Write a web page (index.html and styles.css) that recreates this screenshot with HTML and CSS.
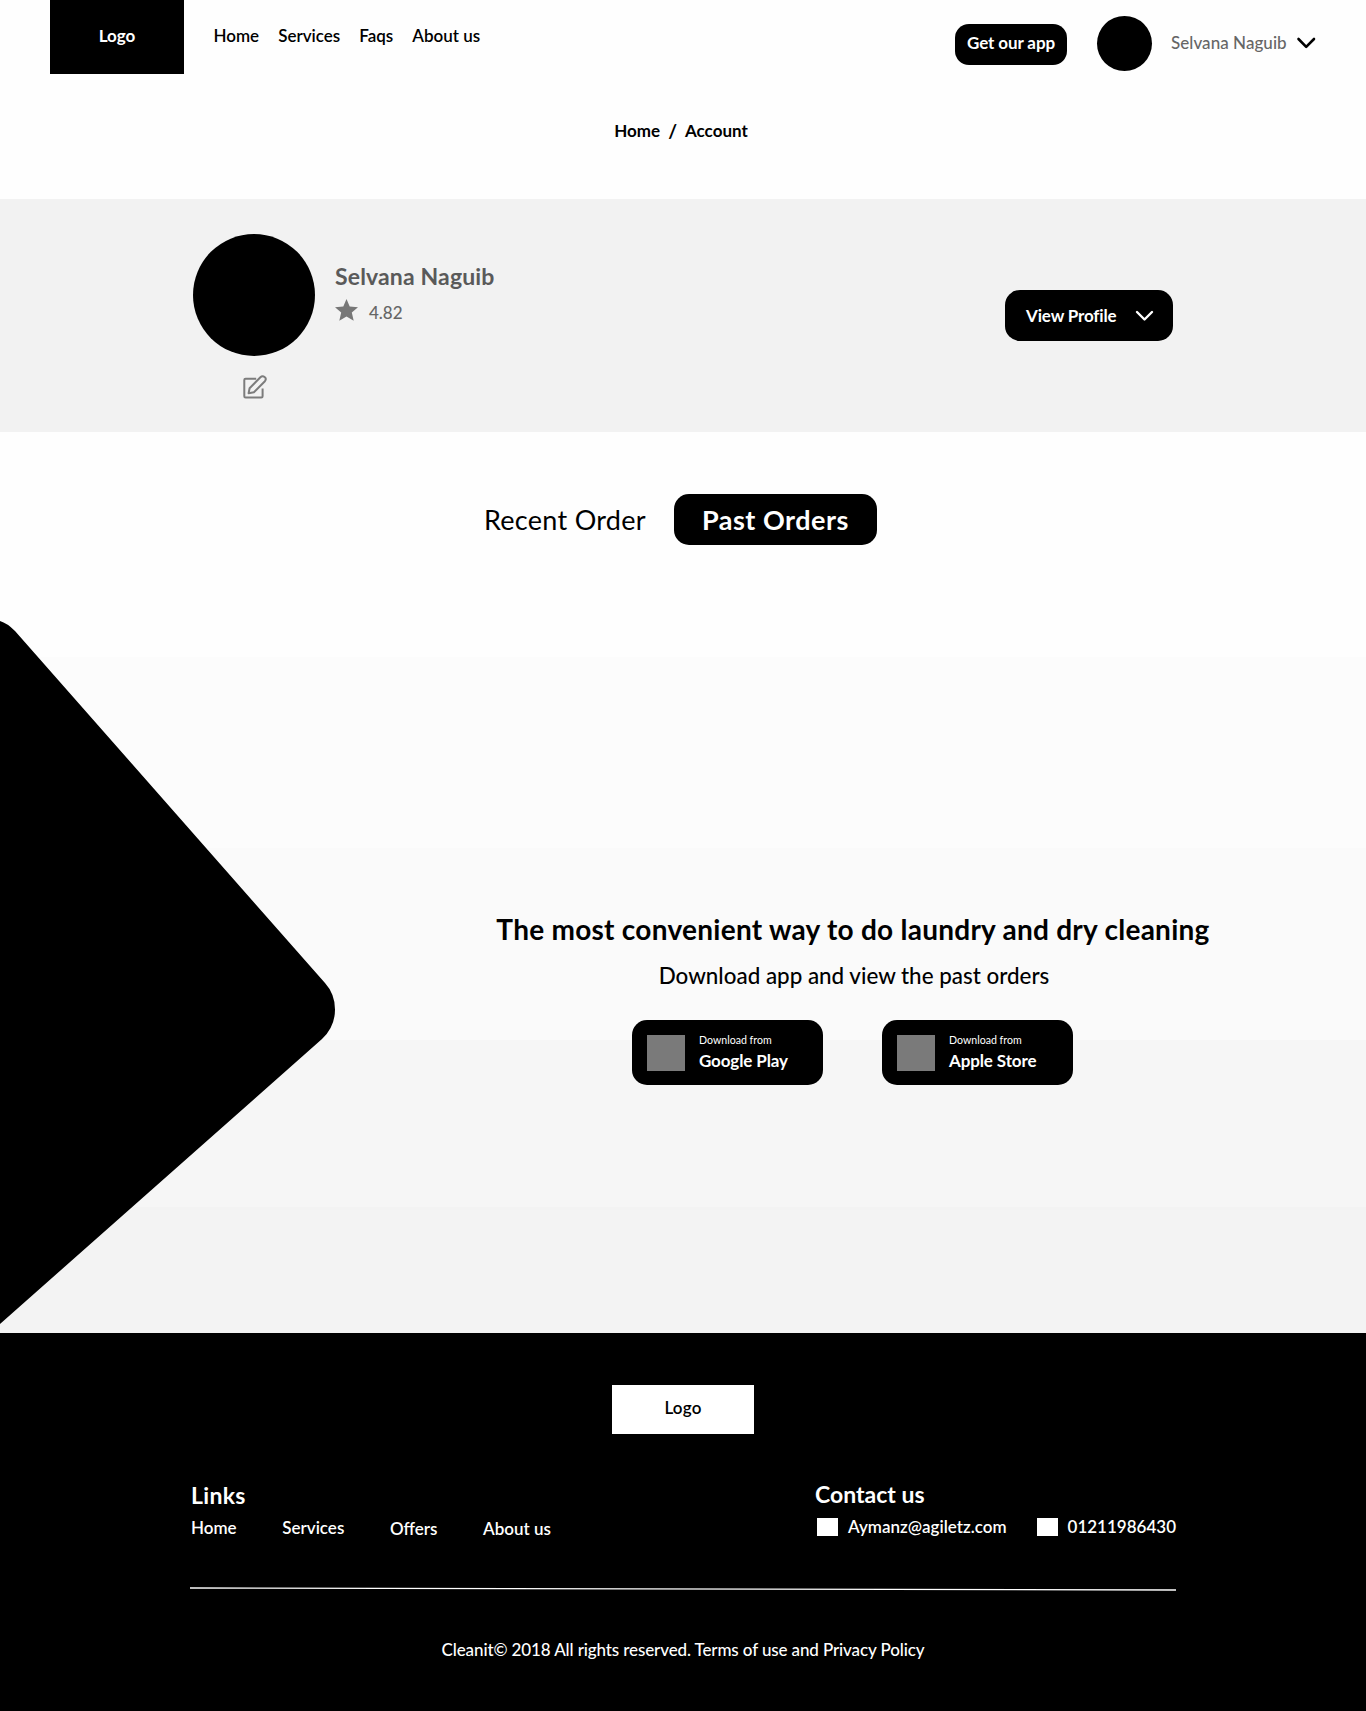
FILE: index.html
```
<!DOCTYPE html>
<html lang="en">
<head>
<meta charset="utf-8">
<title>Account</title>
<link rel="stylesheet" href="styles.css">
</head>
<body>
<header class="header">
  <a class="logo">Logo</a>
  <nav class="nav"><a>Home</a><a>Services</a><a>Faqs</a><a>About us</a></nav>
  <a class="get-app">Get our app</a>
  <span class="avatar-small"></span>
  <span class="user-name">Selvana Naguib</span>
  <svg class="user-chevron" width="20" height="12" viewBox="0 0 20 12"><path d="M2.500 2l7.700 7.800L18 2" fill="none" stroke="#000" stroke-width="2.600" stroke-linecap="round" stroke-linejoin="round"/></svg>
</header>
<div class="breadcrumb"><a>Home</a><span class="slash">/</span><a>Account</a></div>
<section class="profile">
  <div class="portrait">
    <span class="avatar"></span>
    <svg class="edit" width="24" height="24" viewBox="0 0 24 24" fill="none" stroke="#7c7c7c" stroke-width="2" stroke-linejoin="round"><path d="M13.200 3.800H2.600Q1.300 3.800 1.300 5.100V21.300Q1.300 22.600 2.600 22.600H18.300Q19.600 22.600 19.600 21.300V13.600"/><path d="M5.600 18.200l1-5L17.400 2.300q2-2 4.200-.300t.300 4.200L10.900 17.200z"/></svg>
  </div>
  <div class="identity">
    <h1 class="full-name">Selvana Naguib</h1>
    <div class="rating">
      <svg width="23" height="22" viewBox="0 0 23 22"><path d="M11.500 0l3.200 7.400 8.300.9-6.200 5.300 1.900 8.200-7.200-4.300-7.200 4.300 1.900-8.200L0 8.300l8.300-.9z" fill="#777"/></svg>
      <span>4.82</span>
    </div>
  </div>
  <a class="view-profile"><span>View Profile</span><svg width="19" height="12" viewBox="0 0 19 12"><path d="M2 2l7.500 7.500L17 2" fill="none" stroke="#fff" stroke-width="2.400" stroke-linecap="round" stroke-linejoin="round"/></svg></a>
</section>
<main class="orders">
  <svg class="shape" width="336" height="712" viewBox="0 0 336 712"><path d="M0 0Q7 2 15 10L325 362Q335 373 335 388.500Q335 406 322 418L0 703Z"/></svg>
  <div class="tabs"><a class="tab">Recent Order</a><a class="tab tab-active">Past Orders</a></div>
  <div class="promo">
    <h2 class="promo-title">The most convenient way to do laundry and dry cleaning</h2>
    <p class="promo-text">Download app and view the past orders</p>
    <div class="stores">
      <a class="store"><i></i><span class="store-text"><small>Download from</small><b>Google Play</b></span></a>
      <a class="store"><i></i><span class="store-text"><small>Download from</small><b>Apple Store</b></span></a>
    </div>
  </div>
</main>
<footer class="footer">
  <a class="footer-logo">Logo</a>
  <div class="footer-columns">
    <div class="links">
      <h3>Links</h3>
      <div class="link-row"><a>Home</a><a>Services</a><a class="lower">Offers</a><a class="lower">About us</a></div>
    </div>
    <div class="contact">
      <h3>Contact us</h3>
      <div class="contact-row"><i></i><a class="email">Aymanz@agiletz.com</a><i></i><a class="phone">01211986430</a></div>
    </div>
  </div>
  <svg class="rule" width="986" height="4" viewBox="0 0 986 4"><path d="M0 1L986 3" stroke="#fff" stroke-width="1.300"/></svg>
  <p class="copyright">Cleanit© 2018 All rights reserved. Terms of use and Privacy Policy</p>
</footer>
</body>
</html>
```
FILE: styles.css
```
* { box-sizing: border-box; }
body { margin: 0; background: #fefefe; color: #000; font: 500 17px/20px Lato, "Open Sans", sans-serif; }
h1, h2, h3, p { margin: 0; }
a, span, p, h2 { white-space: nowrap; }
svg, i { display: block; flex: none; }

.header { display: flex; align-items: flex-start; height: 74px; padding-left: 50px; }
.logo { width: 134px; height: 74px; padding-top: 26px; background: #000; color: #fff; text-align: center; font-weight: 700; }
.nav { display: flex; gap: 19px; margin: 26px 0 0 29.500px; font-weight: 600; }
.get-app { width: 112px; height: 41px; margin: 24px 0 0 auto; padding-top: 9px; border-radius: 14px; background: #000; color: #fff; text-align: center; font-weight: 700; letter-spacing: -.1px; }
.avatar-small { width: 55px; height: 55px; margin: 16px 0 0 30px; border-radius: 50%; background: #000; }
.user-name { width: 125px; margin: 33px 0 0 19px; color: #666; letter-spacing: .05px; }
.user-chevron { margin: 37px 50px 0 0; }

.breadcrumb { display: flex; justify-content: center; gap: 8px; height: 125px; padding: 47px 4px 0 0; font-weight: 700; }
.slash { font-size: 19px; }

.profile { display: flex; align-items: flex-start; height: 233px; padding: 35px 193px 0; background: #f2f2f2; }
.portrait { display: flex; flex-direction: column; align-items: center; gap: 19px; }
.avatar { width: 122px; height: 122px; border-radius: 50%; background: #000; }
.edit { margin-left: 2px; }
.identity { margin: 28px 0 0 20px; }
.full-name { color: #5a5a5a; font-size: 23px; line-height: 28px; font-weight: 700; letter-spacing: .15px; }
.rating { display: flex; gap: 11px; margin-top: 9px; color: #666; }
.rating span { margin-top: 4px; }
.view-profile { display: flex; align-items: center; justify-content: space-between; width: 168px; height: 51px; margin: 56px 0 0 auto; padding: 0 19px 0 21px; border-radius: 15px; background: #000; color: #fff; font-weight: 700; letter-spacing: -.15px; }

.orders { position: relative; height: 901px; padding-top: 62px; background: linear-gradient(#fefefe 225px, #fcfcfc 225px 416px, #fafafa 416px 608px, #f6f6f6 608px 775px, #f3f3f3 775px); }
.shape { position: absolute; left: 0; top: 189px; }
.tabs { display: flex; align-items: center; gap: 28px; margin-left: 484px; font-size: 27px; line-height: 32px; }
.tab { font-weight: 400; letter-spacing: .28px; }
.tab-active { width: 203px; height: 51px; padding-top: 10px; border-radius: 15px; background: #000; color: #fff; text-align: center; font-weight: 700; letter-spacing: .5px; }
.promo { display: flex; flex-direction: column; align-items: center; width: 720px; margin: 367px 0 0 493px; }
.promo-title { font-size: 28px; line-height: 34px; font-weight: 700; letter-spacing: .26px; }
.promo-text { margin: 16px 0 0 2px; font-size: 22.400px; line-height: 28px; }
.stores { display: flex; gap: 59px; margin: 30px 1px 0 0; }
.store { display: flex; width: 191px; height: 65px; padding: 15px; border-radius: 15px; background: #000; color: #fff; }
.store i { width: 38px; height: 36px; background: #7a7a7a; }
.store-text { display: flex; flex-direction: column; margin: -2px 0 0 14px; }
.store small { font-size: 10.600px; line-height: 14px; font-weight: 400; }
.store b { margin-top: 4px; font-weight: 700; letter-spacing: -.12px; }

.footer { display: flex; flex-direction: column; align-items: center; height: 378px; padding-top: 52px; background: #000; color: #fff; }
.footer-logo { width: 142px; height: 49px; padding-top: 13px; background: #fff; color: #000; text-align: center; font-weight: 600; letter-spacing: .2px; }
.footer-columns { display: flex; justify-content: space-between; width: 986px; margin-top: 47px; padding-left: 1px; }
.footer h3 { font-size: 23px; line-height: 28px; font-weight: 700; }
.links h3 { letter-spacing: .3px; }
.link-row, .contact-row { display: flex; align-items: flex-start; font-weight: 600; }
.link-row { gap: 45.600px; margin-top: 9px; }
.lower { padding-top: 1px; }
.contact { width: 361px; margin-top: -1px; }
.contact-row { margin-top: 9px; }
.contact-row i { width: 21px; height: 18px; margin: 1px 10px 0 2px; background: #fff; }
.email { width: 187px; }
.rule { margin-top: 48px; }
.copyright { margin-top: 49px; letter-spacing: -.12px; }
```
